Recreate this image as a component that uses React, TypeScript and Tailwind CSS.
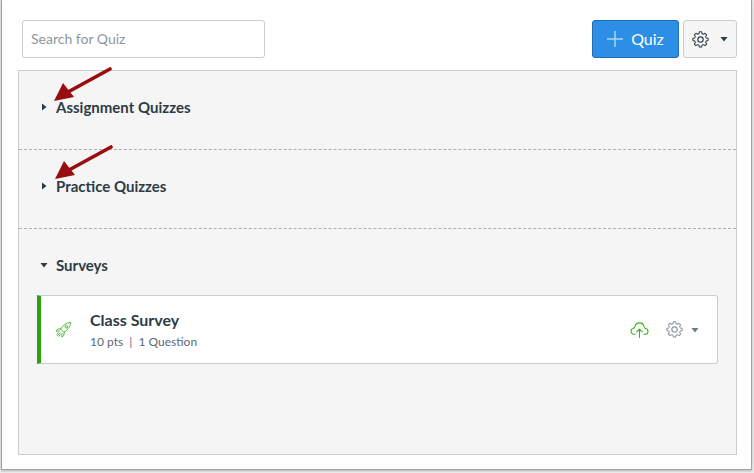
import React from "react";

function Gear({ className }: { className: string }) {
  return (
    <svg viewBox="0 0 24 24" fill="none" stroke="currentColor" strokeWidth="1.6" strokeLinejoin="round" className={className}>
      <circle cx="12" cy="12" r="3.8" />
      <path d="M10.2 2h3.6l.6 2.9 2.2.9 2.6-1.6 2.5 2.5-1.6 2.6.9 2.2 2.9.6v3.6l-2.9.6-.9 2.2 1.6 2.6-2.5 2.5-2.6-1.6-2.2.9-.6 2.9h-3.6l-.6-2.9-2.2-.9-2.6 1.6-2.5-2.5 1.6-2.6-.9-2.2-2.9-.6v-3.6l2.9-.6.9-2.2-1.6-2.6 2.5-2.5 2.6 1.6 2.2-.9z" transform="translate(1.2 -0.6) scale(.9)" />
    </svg>
  );
}

function Caret({ open }: { open?: boolean }) {
  return (
    <svg viewBox="0 0 8 8" className="w-2 h-2 text-[#2d3b45] shrink-0">
      <path d={open ? "M0.5 2h7L4 6.5z" : "M2 .5v7L6.5 4z"} fill="currentColor" />
    </svg>
  );
}

function Arrow({ className }: { className: string }) {
  return (
    <svg viewBox="0 0 60 36" className={className}>
      <path d="M56 2 L14 25" stroke="#980d0d" strokeWidth="3.6" strokeLinecap="round" fill="none" />
      <path d="M0 34 L9 16 L20 30 z" fill="#980d0d" />
    </svg>
  );
}

function Section({ title, open, dashed, children }: { title: string; open?: boolean; dashed?: boolean; children?: React.ReactNode }) {
  return (
    <section className={dashed ? "border-b border-dashed border-[#a9aeb2]" : ""}>
      <div className="h-[78px] flex items-center gap-[8px] pl-[21px] pb-[6px]">
        <Caret open={open} />
        <h2 className="text-[15px] font-bold text-[#2d3b45]">{title}</h2>
      </div>
      {children}
    </section>
  );
}

export default function App(): React.ReactElement {
  return (
    <div className="w-[754px] h-[473px] bg-[#ececec] overflow-hidden font-['Lato',sans-serif]">
      <main className="ml-[1px] mr-[2px] h-[470px] bg-white border-x border-b border-[#a3a3a3] shadow-[0_1px_2px_rgba(0,0,0,0.25)] pl-[16px] pr-[14px] pt-[20px]">
        <div className="flex items-start pl-[4px]">
          <input
            readOnly
            placeholder="Search for Quiz"
            className="w-[243px] h-[38px] border border-[#c7cdd1] rounded-[3px] px-2 pb-[2px] text-[14px] text-[#2d3b45] placeholder:text-[#8c979e] bg-white"
          />
          <button className="ml-auto w-[87px] h-[38px] rounded-[3px] bg-[#2d8ee5] border border-[#1f6db0] text-white text-[16px] flex items-center justify-center gap-[8px]">
            <svg viewBox="0 0 16 16" className="w-4 h-4 text-[#a9d3f5]">
              <path d="M8 0v16M0 8h16" stroke="currentColor" strokeWidth="1.5" />
            </svg>
            Quiz
          </button>
          <button className="ml-[4px] w-[54px] h-[38px] rounded-[3px] bg-[#f5f5f5] border border-[#c7cdd1] flex items-center justify-center gap-[11px] text-[#2d3b45]">
            <Gear className="w-[17px] h-[17px]" />
            <svg viewBox="0 0 8 8" className="w-2 h-2 text-[#2d3b45]">
              <path d="M.5 2h7L4 6.5z" fill="currentColor" />
            </svg>
          </button>
        </div>

        <div className="relative mt-[12px] h-[385px] bg-[#f5f5f5] border border-[#c7cdd1]">
          <Section title="Assignment Quizzes" dashed />
          <Section title="Practice Quizzes" dashed />
          <Section title="Surveys" open>
            <article className="mx-[18px] mt-[-12px] h-[69px] bg-white border border-[#c7cdd1] border-l-[4px] border-l-[#2ca30a] rounded-r-[3px] flex items-center pl-[14px] pr-[18px]">
              <svg viewBox="0 0 18 18" fill="none" stroke="#34b21c" strokeWidth="0.9" strokeLinejoin="round" strokeLinecap="round" className="w-[17px] h-[17px] shrink-0">
                <path d="M6.2 8.2C8.6 4.2 12 2 16.6 1.4 16.2 6 13.8 9.4 9.8 11.8z" />
                <path d="M6.2 8.2 2.8 8.6 1 10.8 4.6 10.6M9.8 11.8 9.4 15.2 7.2 17 7.4 13.4" />
                <circle cx="11.9" cy="6.1" r="1.3" />
                <path d="M5.4 12.6 2.4 15.6M3.6 12.2 1.8 14M5.8 14.4 4 16.2" />
              </svg>
              <div className="ml-[18px] flex-1 pb-[1px]">
                <h3 className="text-[16px] leading-[22px] font-bold text-[#2d3b45]">Class Survey</h3>
                <p className="text-[12px] leading-[16px] mt-[3px] text-[#5a6b77]">10 pts&nbsp; | &nbsp;1 Question</p>
              </div>
              <svg viewBox="0 0 20 18" fill="none" stroke="#34b21c" strokeWidth="1.1" strokeLinecap="round" strokeLinejoin="round" className="w-[19px] h-[17px]">
                <path d="M5.5 14H4C2.2 14 1 12.6 1 11 1 9.4 2.2 8 4 8 4 7.4 4.4 6.7 5 6.4 5.4 4 7.4 2 10 2 12.4 2 14.4 3.8 14.8 6.2 15.2 6.4 15.7 7 15.8 8 17.8 8 19 9.4 19 11 19 12.6 17.8 14 16 14H14.5" />
                <path d="M10 17.5V8.5M7 11.5 10 8.5 13 11.5" />
              </svg>
              <Gear className="ml-[17px] w-[17px] h-[17px] text-[#8b969e]" />
              <svg viewBox="0 0 8 8" className="ml-[8px] w-2 h-2 text-[#6f7c85]">
                <path d="M.5 2h7L4 6.5z" fill="currentColor" />
              </svg>
            </article>
          </Section>
          <Arrow className="absolute left-[35px] top-[-4px] w-[60px] h-[36px]" />
          <Arrow className="absolute left-[36px] top-[74px] w-[60px] h-[36px]" />
        </div>
      </main>
    </div>
  );
}
